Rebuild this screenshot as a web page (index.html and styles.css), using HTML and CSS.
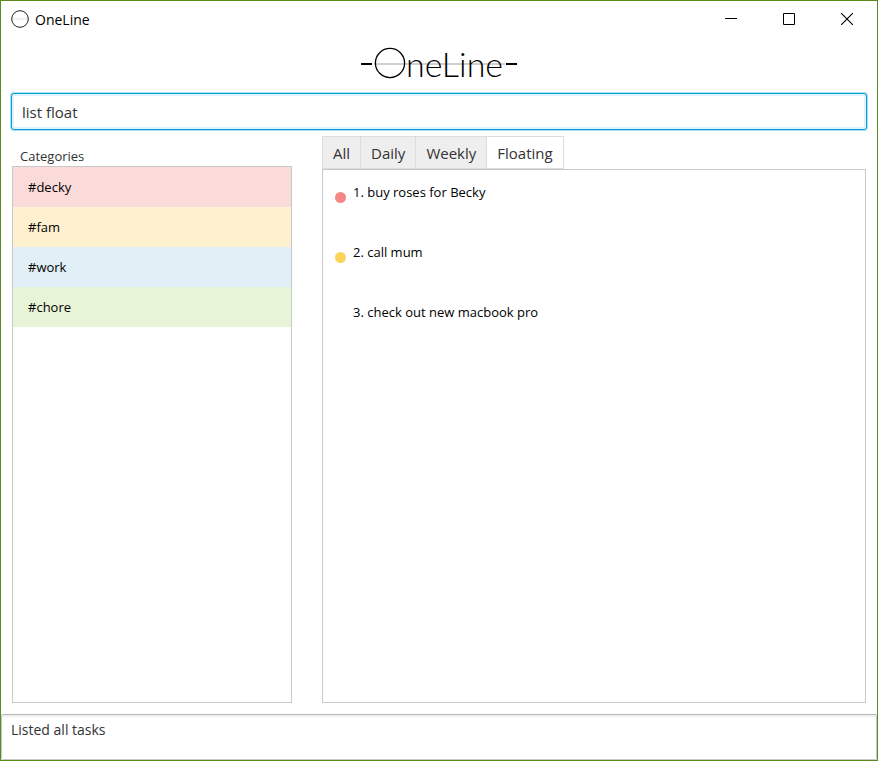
FILE: index.html
```html
<!DOCTYPE html>
<html lang="en">
<head>
<meta charset="utf-8">
<meta name="viewport" content="width=device-width, initial-scale=1">
<title>OneLine</title>
<link rel="stylesheet" href="styles.css">
</head>
<body>
<div class="window">
  <header class="titlebar">
    <svg class="app-icon" width="18" height="18" viewBox="0 0 18 18" aria-hidden="true">
      <path d="M1 9H17" stroke="#e4e4e4"/>
      <circle cx="9" cy="9" r="8.3" fill="none" stroke="#222"/>
    </svg>
    <span class="app-name">OneLine</span>
    <div class="controls">
      <button class="control" type="button" aria-label="Minimize">
        <svg width="12" height="12" viewBox="0 0 12 12"><path d="M0 5.5H12" stroke="#000"/></svg>
      </button>
      <button class="control" type="button" aria-label="Maximize">
        <svg width="12" height="12" viewBox="0 0 12 12"><path d="M.5 .5H11.5V11.5H.5Z" fill="none" stroke="#000"/></svg>
      </button>
      <button class="control" type="button" aria-label="Close">
        <svg width="12" height="12" viewBox="0 0 12 12"><path d="M0 0L12 12M12 0L0 12" stroke="#000" stroke-width="1.1"/></svg>
      </button>
    </div>
  </header>

  <div class="logo">
    <svg class="logo-mark" width="158" height="44" viewBox="0 0 158 44" role="img" aria-label="OneLine">
      <path d="M14 18H145" stroke="#d0d0d0" stroke-width="2"/>
      <path d="M1 18H12M146 18H157" stroke="#000" stroke-width="2"/>
      <circle cx="30" cy="17" r="14.6" fill="none" stroke="#000" stroke-width="1.3"/>
      <text class="logo-text" x="46" y="31">neLine</text>
    </svg>
  </div>

  <input class="command" type="text" value="list float" aria-label="Command">

  <main class="panels">
    <section class="categories">
      <h2 class="heading">Categories</h2>
      <ul class="box category-list">
        <li class="category red">#decky</li>
        <li class="category yellow">#fam</li>
        <li class="category blue">#work</li>
        <li class="category green">#chore</li>
      </ul>
    </section>
    <section class="tasks">
      <div class="tabs" role="tablist">
        <button class="tab" type="button" role="tab" aria-selected="false">All</button>
        <button class="tab" type="button" role="tab" aria-selected="false">Daily</button>
        <button class="tab" type="button" role="tab" aria-selected="false">Weekly</button>
        <button class="tab selected" type="button" role="tab" aria-selected="true">Floating</button>
      </div>
      <ul class="box task-list">
        <li class="task"><span class="dot dot-red"></span>1. buy roses for Becky</li>
        <li class="task"><span class="dot dot-yellow"></span>2. call mum</li>
        <li class="task"><span class="dot"></span>3. check out new macbook pro</li>
      </ul>
    </section>
  </main>

  <footer class="status" role="status">Listed all tasks</footer>
</div>
</body>
</html>
```
FILE: styles.css
```css
* {
  box-sizing: border-box;
}

body {
  margin: 0;
  font-family: "Open Sans", "Noto Sans", sans-serif;
  font-size: 13px;
  color: #000;
  background: #fff;
}

button,
input {
  font: inherit;
}

ul {
  margin: 0;
  padding: 0;
  list-style: none;
}

svg {
  display: block;
}

.window {
  display: flex;
  flex-direction: column;
  min-height: 100vh;
  border: 1px solid #5b8a1e;
}

.titlebar {
  display: flex;
  align-items: center;
  height: 36px;
  padding: 0 1px 0 10px;
}

.app-name {
  margin-left: 6px;
  font-size: 14px;
}

.controls {
  display: flex;
  margin-left: auto;
}

.control {
  display: grid;
  place-items: center;
  width: 58px;
  height: 36px;
  padding: 0;
  border: 0;
  background: none;
}

.logo {
  display: flex;
  justify-content: center;
  margin-top: 9px;
}

.logo-mark {
  overflow: visible;
}

.logo-text {
  font-family: Lato, sans-serif;
  font-size: 34px;
  font-weight: 300;
}

.command {
  height: 37px;
  margin: 3px 10px 0;
  padding: 0 10px;
  border: 1px solid #039ed3;
  border-radius: 3px;
  outline: 0;
  box-shadow: 0 0 0 1px #a8dff2, inset 0 0 0 2px #e0f3fa;
  font-size: 15px;
  color: #333;
}

.panels {
  display: flex;
  flex: 1;
  gap: 30px;
  padding: 6px 11px 11px;
}

.categories,
.tasks {
  display: flex;
  flex-direction: column;
}

.categories {
  flex: 0 0 280px;
}

.tasks {
  flex: 1;
}

.heading {
  margin: 0;
  padding: 10px 8px 0;
  font-size: 13px;
  font-weight: 400;
  line-height: 20px;
  color: #333;
}

.box {
  flex: 1;
  border: 1px solid #c8c8c8;
}

.category {
  height: 40px;
  padding-left: 15px;
  line-height: 40px;
}

.red {
  background: #fbdbda;
}

.yellow {
  background: #fff0cf;
}

.blue {
  background: #e1eff7;
}

.green {
  background: #e7f4d7;
}

.tabs {
  display: flex;
  height: 33px;
}

.tab {
  margin-right: -1px;
  padding: 0 10px;
  border: 1px solid #dcdcdc;
  background: #eee;
  font-size: 15px;
  color: #333;
}

.selected {
  background: #fff;
}

.task-list {
  padding: 12px;
}

.task {
  display: flex;
  height: 60px;
  line-height: 20px;
}

.dot {
  width: 11px;
  height: 11px;
  margin: 10px 7px 0 0;
  border-radius: 50%;
}

.dot-red {
  background: #f58787;
}

.dot-yellow {
  background: #fcd45c;
}

.status {
  height: 46px;
  padding: 5px 9px;
  border: 1px solid #c8c8c8;
  border-top-color: #b5b5b5;
  border-radius: 2px;
  box-shadow: inset 0 2px 2px #eee;
  font-size: 14px;
  line-height: 20px;
  color: #333;
}
```
